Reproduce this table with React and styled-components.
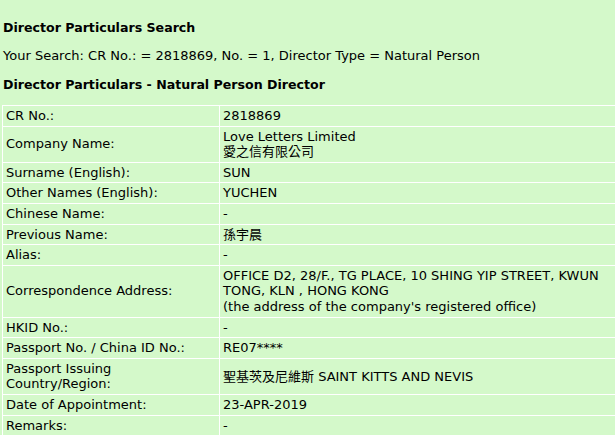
import styled, { createGlobalStyle } from 'styled-components';

const GlobalStyle = createGlobalStyle`
  html, body {
    margin: 0;
    padding: 0;
    background: #d4f9ca;
    overflow: hidden;
  }
  body {
    font-family: 'DejaVu Sans', Verdana, 'Noto Sans CJK TC', sans-serif;
    font-size: 13px;
    color: #000;
  }
`;

const rows = [
  { label: 'CR No.:', value: ['2818869'] },
  { label: 'Company Name:', value: ['Love Letters Limited', '愛之信有限公司'] },
  { label: 'Surname (English):', value: ['SUN'] },
  { label: 'Other Names (English):', value: ['YUCHEN'] },
  { label: 'Chinese Name:', value: ['-'] },
  { label: 'Previous Name:', value: ['孫宇晨'] },
  { label: 'Alias:', value: ['-'] },
  {
    label: 'Correspondence Address:',
    value: [
      'OFFICE D2, 28/F., TG PLACE, 10 SHING YIP STREET, KWUN TONG, KLN , HONG KONG',
      "(the address of the company's registered office)",
    ],
  },
  { label: 'HKID No.:', value: ['-'] },
  { label: 'Passport No. / China ID No.:', value: ['RE07****'] },
  { label: 'Passport Issuing Country/Region:', value: ['聖基茨及尼維斯 SAINT KITTS AND NEVIS'] },
  { label: 'Date of Appointment:', value: ['23-APR-2019'] },
  { label: 'Remarks:', value: ['-'] },
];

const Page = () => (
  <Wrapper>
    <Title>Director Particulars Search</Title>
    <SearchLine>
      Your Search: CR No.: = 2818869, No. = 1, Director Type = Natural Person
    </SearchLine>
    <Title>Director Particulars - Natural Person Director</Title>
    <DetailTable>
      <tbody>
        {rows.map((row) => (
          <tr key={row.label}>
            <LabelCell>{row.label}</LabelCell>
            <ValueCell>
              {row.value.map((line) => (
                <div key={line}>{line}</div>
              ))}
            </ValueCell>
          </tr>
        ))}
      </tbody>
    </DetailTable>
  </Wrapper>
);

export default function App() {
  return (
    <>
      <GlobalStyle />
      <Page />
    </>
  );
}

const Wrapper = styled.div`
  padding: 20px 0 0 3px;
`;

const Title = styled.h3`
  margin: 0 0 12px 0;
  font-size: 12.6px;
  font-weight: bold;
  line-height: 16px;
`;

const SearchLine = styled.p`
  margin: 0 0 13px 0;
  line-height: 16px;
`;

const DetailTable = styled.table`
  margin: 2px 0 0 -1px;
  width: 618px;
  border-collapse: collapse;
  line-height: 15.6px;

  td {
    border: 1px solid #ffffff;
    padding: 2px 3px;
    vertical-align: middle;
    text-align: left;
  }
`;

const LabelCell = styled.td`
  width: 210px;
`;

const ValueCell = styled.td``;
